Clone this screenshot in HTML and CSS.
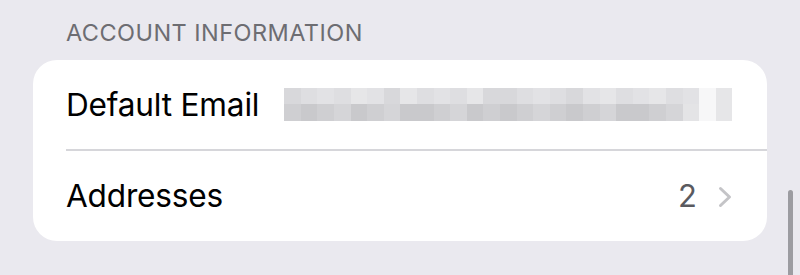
FILE: index.html
```html
<!DOCTYPE html>
<html>
<head>
<meta charset="utf-8">
<link rel="stylesheet" href="styles.css">
</head>
<body>
<div class="page">
  <div class="section-title">ACCOUNT INFORMATION</div>
  <div class="card">
    <div class="row">
      <div class="label">Default Email</div>
      <div class="blur">
        <i class="a"></i><i class="b"></i><i class="c"></i><i class="b"></i><i class="d"></i><i class="c"></i><i class="a"></i><i class="d"></i><i class="b"></i><i class="c"></i><i class="b"></i><i class="d"></i><i class="a"></i><i class="a"></i><i class="b"></i><i class="c"></i><i class="b"></i><i class="a"></i><i class="c"></i><i class="d"></i><i class="b"></i><i class="c"></i><i class="d"></i><i class="b"></i><i class="c"></i><i class="w"></i><i class="d"></i>
        <i class="e"></i><i class="f"></i><i class="e"></i><i class="g"></i><i class="f"></i><i class="e"></i><i class="g"></i><i class="f"></i><i class="f"></i><i class="e"></i><i class="g"></i><i class="f"></i><i class="e"></i><i class="f"></i><i class="e"></i><i class="g"></i><i class="e"></i><i class="f"></i><i class="e"></i><i class="g"></i><i class="f"></i><i class="f"></i><i class="e"></i><i class="g"></i><i class="h"></i><i class="w"></i><i class="d"></i>
      </div>
    </div>
    <div class="sep"></div>
    <div class="row">
      <div class="label">Addresses</div>
      <div class="detail">
        <span class="count">2</span>
        <svg class="chev" width="15" height="22" viewBox="0 0 15 22"><path d="M2.5 2.5 L11.5 11 L2.5 19.5" fill="none" stroke="#c4c4c7" stroke-width="3" stroke-linecap="round" stroke-linejoin="round"/></svg>
      </div>
    </div>
  </div>
  <div class="scrollbar"></div>
</div>
</body>
</html>
```
FILE: styles.css
```css
html, body {
  margin: 0;
  padding: 0;
  background: #eae9ef;
}
.page {
  position: relative;
  width: 800px;
  height: 275px;
  overflow: hidden;
  font-family: Inter, "Liberation Sans", sans-serif;
  padding-top: 19px;
  box-sizing: border-box;
}
.section-title {
  margin-left: 66px;
  font-size: 23.5px;
  line-height: 28px;
  color: #6d6d72;
  letter-spacing: 0.45px;
  height: 41px;
}
.card {
  margin-left: 33px;
  width: 734px;
  background: #ffffff;
  border-radius: 24px;
  display: flex;
  flex-direction: column;
}
.row {
  height: 89px;
  display: flex;
  align-items: center;
  padding-left: 33px;
  padding-right: 34px;
}
.row:last-child {
  height: 90px;
}
.label {
  font-size: 31.6px;
  color: #000;
  letter-spacing: -0.2px;
  flex: 0 0 auto;
}
.sep {
  height: 1.5px;
  background: #d6d6da;
  margin-left: 33px;
}
.blur {
  margin-left: 25px;
  display: grid;
  grid-template-columns: repeat(27, 16.6px);
  grid-template-rows: 16px 17px;
}
.blur i { display: block; }
.blur .a { background: #d8d8db; }
.blur .b { background: #dedee1; }
.blur .c { background: #e2e2e5; }
.blur .d { background: #e6e6e8; }
.blur .e { background: #cfcfd2; }
.blur .f { background: #c9c9cc; }
.blur .g { background: #d5d5d8; }
.blur .h { background: #e4e4e6; }
.blur .w { background: #f7f7f8; }
.detail {
  margin-left: auto;
  display: flex;
  align-items: center;
  gap: 21px;
}
.count {
  font-size: 31px;
  color: #5a5a5f;
}
.chev {
  display: block;
  margin-top: 2px;
}
.scrollbar {
  position: absolute;
  left: 788px;
  top: 190px;
  width: 5px;
  height: 100px;
  border-radius: 3px;
  background: #9c9ca1;
}
```
